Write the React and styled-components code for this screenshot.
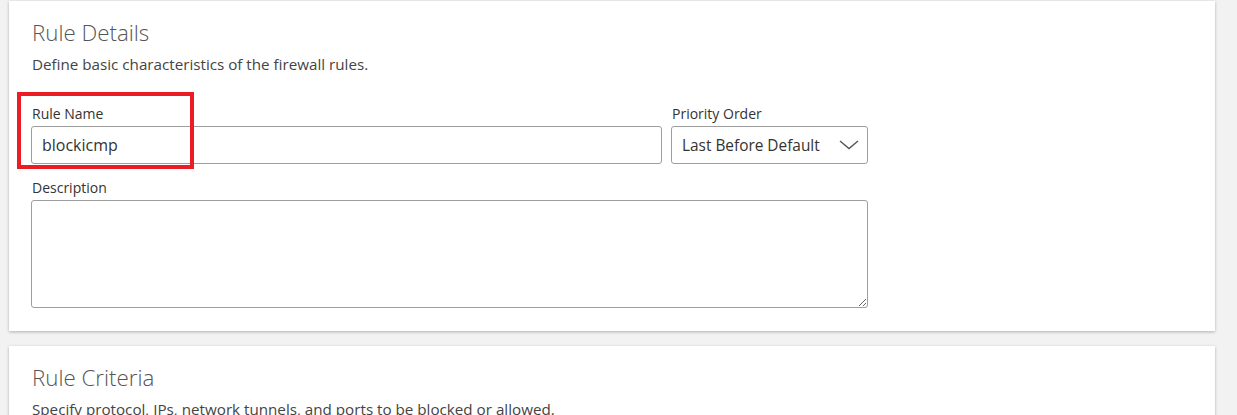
import React, { useState } from "react";
import styled, { createGlobalStyle } from "styled-components";

const GlobalStyle = createGlobalStyle`
  body {
    margin: 0;
    background: #f2f2f2;
    font-family: "Open Sans", "Liberation Sans", Arial, sans-serif;
    color: #333;
  }
`;

export default function App() {
  const [name, setName] = useState("blockicmp");
  const [priority, setPriority] = useState("last");
  const [description, setDescription] = useState("");

  return (
    <>
      <GlobalStyle />
      <Page>
        <Card>
          <Title>Rule Details</Title>
          <Subtitle>Define basic characteristics of the firewall rules.</Subtitle>
          <FormGrid>
            <Field>
              <Label>Rule Name</Label>
              <Input value={name} onChange={e => setName(e.target.value)} />
              <Highlight />
            </Field>
            <Field>
              <Label>Priority Order</Label>
              <SelectBox>
                <Select value={priority} onChange={e => setPriority(e.target.value)}>
                  <option value="last">Last Before Default</option>
                  <option value="first">First</option>
                </Select>
                <Chevron width="20" height="10" viewBox="0 0 20 10">
                  <path d="M1 1 L10 8.5 L19 1" fill="none" stroke="#555" strokeWidth="1.4" />
                </Chevron>
              </SelectBox>
            </Field>
            <Field $wide>
              <Label>Description</Label>
              <TextArea value={description} onChange={e => setDescription(e.target.value)} />
            </Field>
          </FormGrid>
        </Card>
        <Card>
          <Title>Rule Criteria</Title>
          <Subtitle>Specify protocol, IPs, network tunnels, and ports to be blocked or allowed.</Subtitle>
        </Card>
      </Page>
    </>
  );
}

const Page = styled.div`
  display: flex;
  flex-direction: column;
  gap: 15px;
  padding: 1px 22px 0 9px;
`;

const Card = styled.section`
  background: #fff;
  box-shadow: 0 1px 3px rgba(0, 0, 0, 0.28);
  padding: 17px 22px 23px 23px;
`;

const Title = styled.h2`
  margin: 0;
  font-size: 22.3px;
  line-height: 30px;
  font-weight: 300;
  color: #555;
`;

const Subtitle = styled.p`
  margin: 6px 0 0;
  font-size: 15.2px;
  line-height: 20px;
  color: #444;
`;

const FormGrid = styled.div`
  display: grid;
  grid-template-columns: 631px 197px;
  column-gap: 9px;
  row-gap: 14px;
  margin: 30px 0 0 -1px;
`;

const Field = styled.div`
  position: relative;
  display: flex;
  flex-direction: column;
  grid-column: ${p => (p.$wide ? "1 / span 2" : "auto")};
`;

const Label = styled.label`
  font-size: 14px;
  line-height: 20px;
  color: #333;
  padding-left: 1px;
  margin-bottom: 2px;
`;

const Input = styled.input`
  box-sizing: border-box;
  height: 38px;
  border: 1px solid #9e9e9e;
  border-radius: 3px;
  padding: 0 10px;
  font: inherit;
  font-size: 16px;
  color: #333;
  outline: none;
`;

const Highlight = styled.div`
  position: absolute;
  left: -14px;
  top: -12px;
  width: 177px;
  height: 77px;
  box-sizing: border-box;
  border: 4px solid #ec1c24;
  pointer-events: none;
`;

const SelectBox = styled.div`
  position: relative;
`;

const Select = styled.select`
  box-sizing: border-box;
  width: 100%;
  height: 38px;
  border: 1px solid #9e9e9e;
  border-radius: 3px;
  padding: 0 10px;
  background: #fff;
  appearance: none;
  font: inherit;
  font-size: 15.4px;
  color: #333;
  outline: none;
`;

const Chevron = styled.svg`
  position: absolute;
  right: 9px;
  top: 14px;
  pointer-events: none;
`;

const TextArea = styled.textarea`
  box-sizing: border-box;
  height: 108px;
  border: 1px solid #9e9e9e;
  border-radius: 3px;
  padding: 8px 10px;
  font: inherit;
  font-size: 15px;
  outline: none;
`;
